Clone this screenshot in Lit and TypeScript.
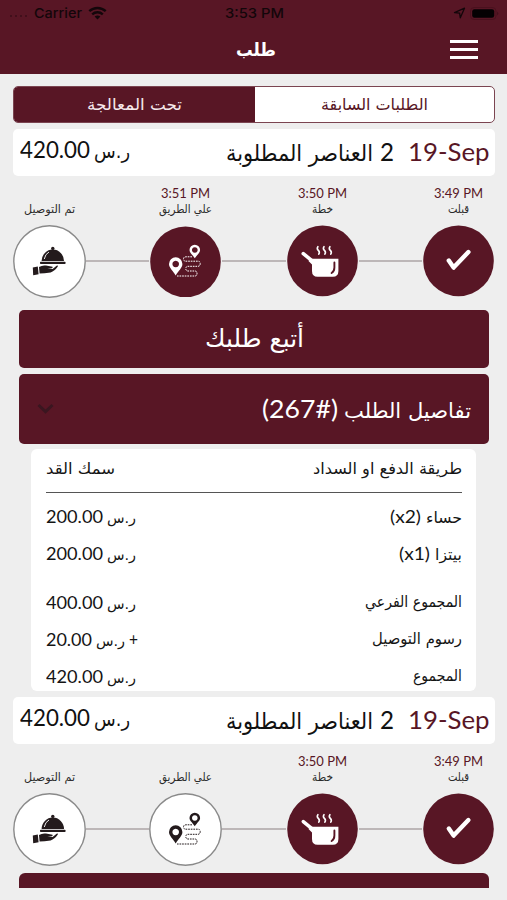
import { LitElement, html, css, svg, nothing } from "lit";
import { customElement, property } from "lit/decorators.js";

/** One line of text, condensed or stretched horizontally to a set width. */
@customElement("fit-text")
class FitText extends LitElement {
  @property({ type: Number }) w = 0;
  @property() text = "";
  @property({ type: Boolean }) rtl = false;

  static styles = css`
    :host { display: block; flex: none; white-space: nowrap; direction: ltr; }
    span { display: inline-block; transform-origin: 0 50%; }
  `;

  render() {
    return html`<span dir=${this.rtl ? "rtl" : "ltr"}>${this.text}</span>`;
  }

  updated() {
    const el = this.renderRoot.querySelector("span") as HTMLElement;
    this.style.width = `${this.w}px`;
    el.style.transform = "none";
    const natural = el.getBoundingClientRect().width;
    if (natural > 0) el.style.transform = `scaleX(${this.w / natural})`;
  }
}

const ar = (text: string, w: number, cls = "") =>
  html`<fit-text class="ar ${cls}" rtl .text=${text} .w=${w}></fit-text>`;
const en = (text: string, w: number, cls = "") =>
  html`<fit-text class="en ${cls}" .text=${text} .w=${w}></fit-text>`;

const icons = {
  check: svg`<path d="M26.8 35.6 L31.6 42.6 L46.4 27" fill="none" stroke="#fff" stroke-width="4.4" stroke-linecap="round" stroke-linejoin="round"/>`,
  pot: svg`
    <path d="M17.3 28.7 L26.5 36.1" stroke="#fff" stroke-width="3.6" stroke-linecap="round"/>
    <path d="M24 33.8 H52.4 V46 Q52.4 51.8 46.8 51.8 H31.6 Q26 51.8 26 46 V39.5 L22.5 36 Z" fill="#fff"/>
    <path d="M48.4 37.4 V42.6 Q48.4 46.6 45.6 48" fill="none" stroke="#581625" stroke-width="1.9" stroke-linecap="round"/>
    <path d="M31.9 21.6 q-1.4 2.1 .4 3.8 t.5 3.8 M38 21.6 q-1.4 2.1 .4 3.8 t.5 3.8 M43.9 21.6 q-1.4 2.1 .4 3.8 t.5 3.8" fill="none" stroke="#fff" stroke-width="1.6" stroke-linecap="round"/>`,
  route: svg`
    <path fill="currentColor" fill-rule="evenodd" d="M45.8 33.2 C43.6 29.8 40.5 27.8 40.5 25 a5.3 5.3 0 0 1 10.6 0 C51.1 27.8 48 29.8 45.8 33.2 Z M45.8 22.2 a2.8 2.8 0 1 0 .01 0 Z"/>
    <path fill="currentColor" fill-rule="evenodd" d="M26.7 50.4 C24 45.6 20 43 20 39 a6.7 6.7 0 0 1 13.4 0 C33.4 43 29.4 45.6 26.7 50.4 Z M26.7 35.7 a3.3 3.3 0 1 0 .01 0 Z"/>
    <path fill="none" stroke="currentColor" stroke-width="1" stroke-dasharray="1.7 .9" d="M43 31.8 H37 Q34.5 31.8 34.5 34 T37 36.2 H49 Q51.2 36.2 51.2 38.7 T49 41.3 H39 Q36.8 41.3 36.8 43.6 T39 46 H46 Q48 46 48 48.5 T46 51 H28"/>`,
  serve: svg`
    <g fill="#231a1c">
      <circle cx="39.8" cy="23.4" r="1.7"/>
      <path d="M28.6 36 a11.2 11.4 0 0 1 22.4 0 Z"/>
      <rect x="27" y="36.8" width="25.6" height="2.2" rx=".8"/>
      <path d="M19.8 42.4 L24.8 41.4 L25.6 49.3 L20.2 50.2 Z"/>
      <path d="M26 42 Q29.5 39.9 33 40.6 L39.5 41.8 Q40.4 42.6 38.8 43.3 L34.4 43.7 L39.6 44.1 L43.6 40.8 Q45.4 40.2 44.8 41.6 Q41.6 46.4 37.6 47.4 Q31 48.2 26.6 48.4 Z"/>
    </g>
    <path d="M31.3 34 Q32.2 29 36 27" fill="none" stroke="#fff" stroke-width=".9"/>`,
};

type Stage = { label: string; w: number; time?: string; icon: keyof typeof icons; done: boolean; low?: boolean };

const stages = (onWay: boolean): Stage[] => [
  { label: "تم التوصيل", w: 51, icon: "serve", done: false },
  { label: "علي الطريق", w: 53, time: onWay ? "3:51 PM" : undefined, icon: "route", done: onWay, low: true },
  { label: "خطة", w: 21, time: "3:50 PM", icon: "pot", done: true },
  { label: "قبلت", w: 21, time: "3:49 PM", icon: "check", done: true },
];

@customElement("app-root")
class AppRoot extends LitElement {
  static styles = css`
    :host {
      display: block; width: 507px; height: 900px; overflow: hidden;
      background: #eeeeee; color: #151515; font-family: Lato, "DejaVu Sans", sans-serif;
    }
    * { box-sizing: border-box; }
    .ar { font-family: "DejaVu Sans", sans-serif; }
    .en { font-family: Lato, sans-serif; }
    header { height: 74px; background: #581625; color: #fff; }
    .status {
      height: 26px; padding: 0 8px 0 10px; color: #13060a; display: grid;
      grid-template-columns: 1fr auto 1fr; align-items: center;
    }
    .status .en { font-family: Inter, sans-serif; font-size: 13.5px; font-weight: 500; line-height: 26px; }
    .left, .right { display: flex; align-items: center; }
    .right { justify-content: flex-end; gap: 4px; }
    .dots { display: flex; gap: 3px; width: 24px; padding-top: 6px; }
    .dots i { width: 2px; height: 2px; border-radius: 1px; background: #3a0e18; }
    .wifi { margin-left: 6px; }
    .nav { height: 48px; display: grid; grid-template-columns: 1fr auto 1fr; align-items: center; padding-right: 29px; padding-left: 33px; }
    .nav .ar { font-size: 18px; font-weight: 700; grid-column: 2; line-height: 24px; }
    .menu { justify-self: end; width: 28px; display: grid; gap: 5px; margin-top: -1px; }
    .menu i { height: 3px; background: #fff; }
    .tabs {
      margin: 12px 12px 0 13px; height: 37px; display: grid; grid-template-columns: 241px 1fr;
      border: 1px solid #7b4551; border-radius: 5px; overflow: hidden; background: #fff;
    }
    .tab { display: grid; place-items: center; color: #581625; font-size: 16px; line-height: 30px; }
    .tab.on { background: #581625; color: #f6e9ec; }
    .summary {
      height: 47px; margin: 6px 12px 0 13px; padding: 0 6px 0 7px; border-radius: 5px; background: #fff;
      display: flex; justify-content: space-between; line-height: 46px; color: #111;
    }
    .price, .title { display: flex; align-items: baseline; }
    .price { gap: 4px; }
    .summary .price { font-size: 22.5px; line-height: 41px; }
    .summary .price .ar { font-size: 19px; }
    .summary .title { font-size: 25.5px; line-height: 45px; }
    .summary .title .ar { font-size: 23px; margin-right: 7px; }
    .date { color: #581625; margin-left: 14px; }
    .labels { display: flex; justify-content: space-between; margin: 9px 12px 0 13px; height: 39.5px; }
    .stage { width: 73px; display: flex; flex-direction: column; align-items: center; }
    .stage .time { height: 16.5px; line-height: 16px; font-size: 13px; color: #581625; }
    .stage .ar { font-size: 11.5px; line-height: 15px; color: #2a2a2a; }
    .track { display: flex; align-items: center; margin: 0 12px 0 13px; height: 73px; }
    .wire { flex: 1; height: 2px; background: #bdb7b8; }
    .node { width: 73px; height: 73px; flex: none; display: block; color: #231a1c; }
    .node.done { color: #fff; }
    .body { margin: 12.5px 18px 0 19px; display: flex; flex-direction: column; gap: 6px; }
    .button {
      height: 58px; border-radius: 5px; background: #581625; color: #fff; display: flex;
      align-items: center; justify-content: center; font-size: 25px; line-height: 56px;
    }
    .details { height: 70px; padding: 0 18px; justify-content: space-between; line-height: 67px; }
    .details .name { display: flex; align-items: baseline; gap: 6px; height: 68px; }
    .details .ar { font-size: 21px; }
    .details .en { font-size: 25.5px; }
    .bill { height: 242px; margin: -1px 13px 0 12px; padding: 0 14px 0 15px; background: #fff; border-radius: 6px; }
    .row { display: flex; justify-content: space-between; font-size: 18px; height: 36.7px; line-height: 35px; }
    .row .ar { font-size: 15.5px; }
    .row .price .ar { font-size: 14.5px; }
    .row .name { display: flex; align-items: baseline; gap: 5px; }
    .row.head { height: 44px; border-bottom: 1.5px solid #555; line-height: 41px; margin-bottom: 6.3px; }
    .row.head .ar { font-size: 15.5px; }
    .row.gap { margin-top: 12.8px; }
    .next { height: 15px; border-radius: 6px 6px 0 0; background: #581625; margin: 7.5px 18px 0 19px; }
  `;

  private order(onWay: boolean) {
    const list = stages(onWay);
    return html`
      <section class="summary">
        <div class="price">${en("420.00", 70)}${ar("ر.س", 36)}</div>
        <div class="title">${ar("العناصر المطلوبة", 147)}${en("2", 14)}${en("19-Sep", 81.5, "date")}</div>
      </section>
      <div class="labels">
        ${list.map((s) => html`<div class="stage">
          <div class="time">${s.time ? en(s.time, 49) : nothing}</div>${ar(s.label, s.w)}
        </div>`)}
      </div>
      <div class="track">
        ${list.map((s, i) => html`${i ? html`<div class="wire"></div>` : nothing}
          <svg class="node ${s.done ? "done" : ""}" viewBox="0 0 73 73">
            ${s.done
              ? svg`<circle cx="36.5" cy=${s.low ? 36.8 : 35.9} r="35.3" fill="#581625"/>`
              : svg`<circle cx="36.5" cy="36.5" r="35.7" fill="#fff" stroke="#8a8a8a" stroke-width="1.4"/>`}
            ${icons[s.icon]}
          </svg>`)}
      </div>`;
  }

  private row(label: unknown, price: unknown, cls = "") {
    return html`<div class="row ${cls}"><div class="price">${price}</div><div class="name">${label}</div></div>`;
  }

  render() {
    const rs = () => ar("ر.س", 29);
    return html`
      <header>
        <div class="status">
          <div class="left">
            <div class="dots"><i></i><i></i><i></i><i></i></div>
            ${en("Carrier", 48)}
            <svg class="wifi" width="19" height="14" viewBox="0 0 19 14">
              <path d="M1.3 5.2 A12 12 0 0 1 17.7 5.2 M4.2 8.3 A8 8 0 0 1 14.8 8.3" fill="none" stroke="#13060a" stroke-width="2.4"/>
              <path d="M6.6 10.6 Q9.5 8.3 12.4 10.6 L9.5 13.4 Z" fill="#13060a"/>
            </svg>
          </div>
          ${en("3:53 PM", 59)}
          <div class="right">
            <svg width="13" height="12" viewBox="0 0 13 12"><path d="M1.5 5.6 L11.5 1.2 L7.3 10.8 L6.6 6.2 Z" fill="none" stroke="#13060a" stroke-width="1.3" stroke-linejoin="round"/></svg>
            <svg width="29" height="13" viewBox="0 0 29 13">
              <rect x=".5" y=".5" width="25.5" height="12" rx="3.6" fill="none" stroke="#4a111e"/>
              <rect x="2.2" y="2.2" width="22" height="8.6" rx="2.2" fill="#050103"/>
              <path d="M27.3 4.4 Q29.2 6.5 27.3 8.6 Z" fill="#3b0e19"/>
            </svg>
          </div>
        </div>
        <div class="nav">${ar("طلب", 40)}<div class="menu"><i></i><i></i><i></i></div></div>
      </header>
      <div class="tabs">
        <div class="tab on">${ar("تحت المعالجة", 95)}</div>
        <div class="tab">${ar("الطلبات السابقة", 107)}</div>
      </div>
      ${this.order(true)}
      <div class="body">
        <div class="button">${ar("أتبع طلبك", 99)}</div>
        <div class="button details">
          <svg width="17" height="12" viewBox="0 0 17 12"><path d="M1.5 2 L8.5 8.6 L15.5 2" fill="none" stroke="#3a1620" stroke-width="3"/></svg>
          <div class="name">${en("(267#)", 76)}${ar("تفاصيل الطلب", 127)}</div>
        </div>
        <div class="bill">
          ${this.row(ar("طريقة الدفع او السداد", 149), ar("سمك القد", 69), "head")}
          ${this.row([en("(x2)", 31), ar("حساء", 36)], [en("200.00", 57), rs()])}
          ${this.row([en("(x1)", 31), ar("بيتزا", 27)], [en("200.00", 57), rs()])}
          ${this.row(ar("المجموع الفرعي", 97), [en("400.00", 57), rs()], "gap")}
          ${this.row(ar("رسوم التوصيل", 90), [en("20.00", 46), rs(), en("+", 9)])}
          ${this.row(ar("المجموع", 49), [en("420.00", 57), rs()])}
        </div>
      </div>
      ${this.order(false)}
      <div class="next"></div>
    `;
  }
}
